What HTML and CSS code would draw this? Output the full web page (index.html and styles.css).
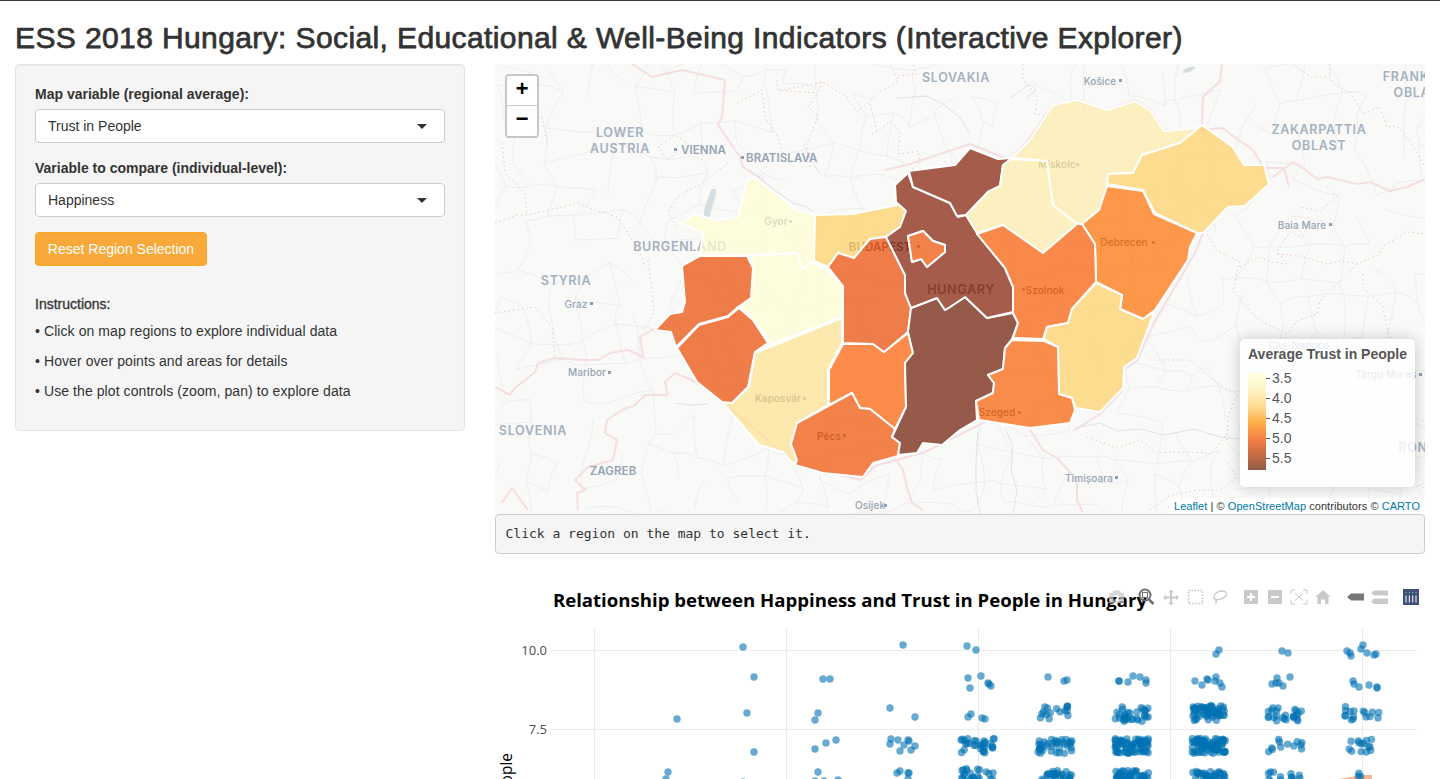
FILE: index.html
```html
<!DOCTYPE html>
<html lang="en">
<head>
<meta charset="utf-8">
<title>ESS 2018 Hungary</title>
<link rel="stylesheet" href="styles.css">
</head>
<body>
<div class="page">
  <h2 class="page-title">ESS 2018 Hungary: Social, Educational &amp; Well-Being Indicators (Interactive Explorer)</h2>
  <div class="layout">
    <aside class="well">
      <div class="form-group">
        <label class="field-label">Map variable (regional average):</label>
        <div class="select-box"><span>Trust in People</span><i class="caret"></i></div>
      </div>
      <div class="form-group">
        <label class="field-label">Variable to compare (individual-level):</label>
        <div class="select-box"><span>Happiness</span><i class="caret"></i></div>
      </div>
      <button class="btn-reset" type="button">Reset Region Selection</button>
      <div class="instructions">
        <p class="instr-head">Instructions:</p>
        <p>• Click on map regions to explore individual data</p>
        <p>• Hover over points and areas for details</p>
        <p>• Use the plot controls (zoom, pan) to explore data</p>
      </div>
    </aside>
    <main class="content">
      <div class="map">
        <svg class="map-svg" viewBox="495 64 930 450" width="930" height="450" xmlns="http://www.w3.org/2000/svg">
          <g id="roads" class="roads"></g>
          <g class="water">
            <path d="M711 190c4-3 6 0 5 5l-4 12-2 10-5 2c-2-5-1-10 1-15z"/>
            <path d="M1183 71c3-3 8-5 12-4 0 3-6 6-12 6z"/>
          </g>
          <g class="rivers">
            <path d="M743 167l14 8 16 14 20 14 12 3 8 6"/>
            <path d="M803 144l7 14 10 16"/>
            <path d="M1075 428l25-5 18 8 22-2 24 6 30-6 26 8 40 4 40-6"/>
            <path d="M675 403l15 2 18-1"/>
            <path d="M1005 428l8 18-2 24 6 20-4 24"/>
            <path d="M978 430l-2 30 0 30 4 24"/>
            <path d="M1010 98l20-14 6 6-10 8M897 98l30-2 16 8 18 14 8 16"/>
          </g>
          <g class="borders">
            <path d="M632 64l20 13 30-7 43 10-3 37-4 8 22 32 3 10 14 9 30 27"/>
            <path d="M495 387l15 8 5-7 20-16 3-9 17-5 27 2 16 0 12-7 18-3 15 7-3-20 12-7 19 2"/>
            <path d="M668 395l-3-13 10-9 17 7 3 3"/>
            <path d="M668 395h-23l-10 10-13 5-15 10-2 13 12 7-4 20-25 7-13 13 10 10-8 3 1 17"/>
            <path d="M512 488l-10 15M512 488l16 22"/>
            <path d="M722 402l75 62 4 2 60 14 14-14 50-14 60-30"/>
            <path d="M895 458l8 12 4 17 5 16 11 7"/>
            <path d="M1030 430l13 20 14 8 20 22v20l6 13"/>
            <path d="M885 170l25-6 60-20 40 16 18-20 25-35 25-5 30 10 27-10 15 9 14 21h36l22-2 31 22 11 18h20l5 19"/>
            <path d="M1222 64l-2 17-17 16-1 27"/>
            <path d="M1273 177l20-15 14 9 10 8 10-2 30 7 13-2 20 9 17-4 18-8"/>
            <path d="M1269 184l-24 22-17 1-25 26-8 20-40 68-18 40-14 9-1 21-23 24-26 16"/>
          </g>
          <g class="borders-dot">
            <path d="M495 313l40-6 17 20 3 30"/>
            <path d="M648 260l4 30 2 23-12 19"/>
            <path d="M780 91l17-4 26-5 24 15 10 15 23-20 18-11-8-17"/>
            <path d="M898 76l19-2-4-10"/>
            <path d="M1023 64v15l14 18-2 17 12 2"/>
            <path d="M872 134l18-12 10 9-2 23 20-3 2 13-12 7"/>
            <path d="M823 82l-6 12-9 13 10 9-11 28 3 23"/>
            <path d="M870 104l7 27"/>
            <path d="M1293 64l17 13h20l3 7 17 8 13 22 17-7 7 20 10-1 13 15 15 26"/>
            <path d="M1330 64v13"/>
            <path d="M1327 186l10 11-17 14-20-4"/>
            <path d="M1207 234l10 17 23 10-7 30 17 20 10 10"/>
            <path d="M1240 267l17-10 16 5 14 2-10-13 13-19 13 5"/>
            <path d="M1277 254l23 2 27 8 13-3 17 3 23-10 3-8 24-14 18 2"/>
            <path d="M1357 264l-17 17-20 20-3 13-20 7-10 13-27-13"/>
            <path d="M1363 274v13l20 20 4 20 6 17"/>
            <path d="M1150 360h40l27 23 20 12-9 22-1 26 10 10"/>
            <path d="M1087 437l30 11 23-8 17 13 13-1 43 1 14-20"/>
            <path d="M1227 463l10 14-17 13h-20l-30 5-20 15"/>
            <path d="M1310 470l35 12 40-8 40 14"/>
            <path d="M1245 385l35 14 25-8 40 22 35-6 45 14"/>
            <path d="M737 103l25-13 3 27 12 18 8 25"/>
            <path d="M777 80l1 10 37 3"/>
            <path d="M495 223l23-8h10l50-12 17 7 22 7 11 16 14 24 3 10"/>
            <path d="M502 143l3 30 20 20 2 20"/>
            <path d="M542 117l6 30"/>
            <path d="M658 147l17-12 12 8-12 10-7 7z"/>
            <path d="M728 163l-26 20-25 14-9 16 10 14"/>
          </g>
          <g class="labels">
            <text class="lbl-lg" x="956" y="82">SLOVAKIA</text>
            <text class="lbl-sm" x="1100" y="85">Košice</text>
            <text class="lbl-lg" x="1406" y="81">FRANK</text>
            <text class="lbl-lg" x="1412" y="97">OBLA</text>
            <text class="lbl-lg" x="620" y="137">LOWER</text>
            <text class="lbl-lg" x="620" y="153">AUSTRIA</text>
            <text class="lbl-md lbl-start" x="681" y="154">VIENNA</text>
            <text class="lbl-md lbl-start" x="746" y="162">BRATISLAVA</text>
            <text class="lbl-lg" x="1319" y="134">ZAKARPATTIA</text>
            <text class="lbl-lg" x="1319" y="150">OBLAST</text>
            <text class="lbl-lg" x="680" y="251">BURGENLAND</text>
            <text class="lbl-lg" x="566" y="285">STYRIA</text>
            <text class="lbl-lg" x="533" y="435">SLOVENIA</text>
            <text class="lbl-md" x="613" y="475">ZAGREB</text>
            <text class="lbl-sm" x="576" y="308">Graz</text>
            <text class="lbl-sm" x="587" y="376">Maribor</text>
            <text class="lbl-sm" x="870" y="509">Osijek</text>
            <text class="lbl-sm" x="1089" y="482">Timișoara</text>
            <text class="lbl-sm" x="1302" y="229">Baia Mare</text>
            <text class="lbl-sm" x="1386" y="378">Târgu Mureș</text>
            <text class="lbl-sm" x="1299" y="349">Cluj-Napoca</text>
            <text class="lbl-lg" x="1413" y="452">RON</text>
            <text class="lbl-sm lbl-city" x="776" y="225">Gyor</text>
            <text class="lbl-md lbl-city" x="880" y="251">BUDAPEST</text>
            <text class="lbl-lg lbl-city" x="961" y="294">HUNGARY</text>
            <text class="lbl-sm lbl-city" x="1057" y="168">Miskolc</text>
            <text class="lbl-sm lbl-city" x="1124" y="246">Debrecen</text>
            <text class="lbl-sm lbl-city" x="1045" y="294">Szolnok</text>
            <text class="lbl-sm lbl-city" x="778" y="402">Kaposvár</text>
            <text class="lbl-sm lbl-city" x="829" y="440">Pécs</text>
            <text class="lbl-sm lbl-city" x="997" y="416">Szeged</text>
          </g>
          <g class="dots">
            <rect x="674" y="148" width="3" height="3"/><rect x="741" y="156" width="3" height="3"/>
            <rect x="590" y="302" width="3" height="3"/><rect x="608" y="371" width="3" height="3"/>
            <rect x="884" y="504" width="3" height="3"/><rect x="1115" y="476" width="3" height="3"/>
            <rect x="1329" y="223" width="3" height="3"/><rect x="1119" y="79" width="3" height="3"/>
            <rect x="1419" y="373" width="3" height="3"/>
            <rect x="789" y="220" width="3" height="3"/><rect x="917" y="245" width="3" height="3"/>
            <rect x="1076" y="163" width="3" height="3"/><rect x="1152" y="241" width="3" height="3"/>
            <rect x="1022" y="288" width="3" height="3"/><rect x="803" y="397" width="3" height="3"/>
            <rect x="843" y="434" width="3" height="3"/><rect x="1018" y="411" width="3" height="3"/>
          </g>
          <g class="regions">
            <polygon class="c-pale" points="680,223 695,214 715,220 738,217 747,180 755,177 787,202 798,211 815,214 814,261 812,262 802,269 797,253 750,255 700,255 703,233"/>
            <polygon class="c-pale" points="750,256 797,253 802,269 813,262 828,270 843,286 842,317 772,344 753,320 740,307 750,298 753,268"/>
            <polygon class="c-light" points="815,215 853,214 902,204 906,211 900,227 885,237 870,239 854,258 838,253 828,267 814,261"/>
            <polygon class="c-vas" points="700,256 747,256 753,268 751,298 738,307 728,316 699,324 676,347 671,332 655,330 670,314 682,312 685,302 682,266"/>
            <polygon class="c-vas" points="677,348 699,325 728,317 739,308 753,320 768,343 755,352 748,387 732,403 722,402 697,382"/>
            <polygon class="c-somogy" points="755,353 842,318 842,343 828,370 828,405 797,423 791,444 797,460 793,464 783,452 759,445 723,403 732,403 749,387"/>
            <polygon class="c-orange" points="843,344 873,344 884,352 908,333 913,353 905,363 906,407 895,429 870,409 860,408 852,393 829,405 829,370"/>
            <polygon class="c-baranya" points="852,393 860,408 870,409 895,429 892,437 900,443 898,456 873,463 863,477 823,473 795,465 797,460 791,444 797,423"/>
            <polygon class="c-vas" points="828,267 838,253 854,258 870,239 886,237 905,275 905,293 911,308 908,332 884,352 873,344 843,343 843,286"/>
            <polygon class="c-darkest" points="911,308 937,298 945,310 950,307 965,297 987,318 1013,313 1018,323 1012,339 1005,348 1003,369 988,375 994,383 993,393 976,401 977,420 960,430 942,445 923,443 917,453 898,455 900,443 892,437 906,407 905,363 913,353 908,332"/>
            <path class="c-dark" d="M886 237 900 227 906 211 896 202 895 185 908 173 913 187 950 203 958 217 966 215 977 233 1005 268 1013 287 1013 312 987 318 965 297 950 307 945 310 937 298 911 308 905 293 905 275ZM908 236 923 231 933 241 945 245 945 252 927 267 921 259 912 262Z"/>
            <polygon class="c-dark" points="909,171 955,165 970,148 998,159 1012,158 1003,165 1000,186 988,192 966,215 957,216 950,203 913,187"/>
            <polygon class="c-buda" points="908,236 923,231 933,241 945,245 945,252 927,267 921,259 912,262"/>
            <polygon class="c-heves" points="1012,159 1047,161 1053,205 1077,224 1043,253 1003,225 977,233 966,215 988,192 1000,186 1003,165"/>
            <polygon class="c-heves" points="1012,158 1030,140 1053,105 1077,100 1108,110 1135,101 1150,110 1164,131 1200,128 1180,143 1142,155 1133,173 1108,174 1107,187 1099,210 1082,224 1077,224 1053,205 1047,161"/>
            <polygon class="c-light" points="1202,125 1233,147 1244,165 1264,165 1269,184 1245,206 1228,207 1203,233 1197,233 1155,213 1143,190 1107,184 1108,174 1133,173 1142,155 1180,143"/>
            <polygon class="c-hajdu" points="1107,186 1143,191 1154,214 1197,233 1190,247 1188,260 1155,310 1143,319 1120,309 1122,295 1096,282 1095,244 1082,224 1099,210"/>
            <polygon class="c-szolnok" points="1003,225 1043,253 1077,224 1082,224 1095,244 1096,282 1072,309 1068,323 1047,327 1043,339 1013,338 1018,323 1013,313 1013,287 1005,268 977,234"/>
            <polygon class="c-light" points="1096,283 1122,295 1120,309 1143,319 1154,312 1137,358 1124,367 1123,388 1100,412 1076,408 1072,398 1059,394 1058,347 1044,339 1047,327 1068,323 1072,309"/>
            <polygon class="c-szeged" points="1012,340 1044,341 1058,347 1059,394 1072,398 1075,410 1070,423 1030,428 979,420 976,401 993,393 994,383 988,375 1003,369 1005,348"/>
          </g>
        </svg>
        <div class="zoom-ctl">
          <a class="zoom-btn">+</a>
          <a class="zoom-btn">−</a>
        </div>
        <div class="legend">
          <div class="legend-title">Average Trust in People</div>
          <div class="legend-body">
            <div class="legend-bar"></div>
            <div class="legend-ticks">
              <span>3.5</span><span>4.0</span><span>4.5</span><span>5.0</span><span>5.5</span>
            </div>
          </div>
        </div>
        <div class="attribution"><a>Leaflet</a> | © <a>OpenStreetMap</a> contributors © <a>CARTO</a></div>
      </div>
      <pre class="output">Click a region on the map to select it.</pre>
      <svg class="plot" viewBox="495 564 930 600" width="930" height="600" xmlns="http://www.w3.org/2000/svg">
        <g class="grid">
          <path d="M594 629V1100M786 629V1100M978 629V1100M1170 629V1100M1362 629V1100"/>
          <path d="M549 650H1417M549 729H1417"/>
        </g>
        <text class="tick" x="547" y="655">10.0</text>
        <text class="tick" x="547" y="734">7.5</text>
        <text class="axis-title" transform="translate(512,753) rotate(-90)">Trust in People</text>
        <polygon class="trend-band" points="1332,780 1363,775 1372,775 1372,782"/>
        <g id="points" class="points"></g>
        <text class="plot-title" x="850" y="607">Relationship between Happiness and Trust in People in Hungary</text>
        <g class="modebar">
          <path class="mb-faint" d="M1109 593h3l1.500-2.500h6l1.500 2.500h3v10h-15zM1116.500 595a3 3 0 1 0 .01 0z"/>
          <g class="mb-active">
            <circle class="mb-ring" cx="1145" cy="595" r="5.500"/>
            <path class="mb-handle" d="M1149 599.500l4.500 4.500"/>
            <rect x="1142.500" y="592.500" width="5" height="5"/>
          </g>
          <path class="mb-icon" d="M1171 589.500l2.800 3h-1.800v4h4v-1.800l3 2.800-3 2.800v-1.800h-4v4h1.800l-2.800 3-2.800-3h1.800v-4h-4v1.800l-3-2.800 3-2.800v1.800h4v-4h-1.800z"/>
          <rect class="mb-dash" x="1188.500" y="590.500" width="14" height="13"/>
          <path class="mb-lasso" d="M1214 597c0-3.500 4-6 8-6 3 0 5 1.500 4.500 3.500-1 3-6 5.500-10 5-1.500-.2-2.500-1.200-2.500-2.500zM1215.500 600c1 1 1 2.500 0 4"/>
          <path class="mb-icon" fill-rule="evenodd" d="M1244 590h14v14h-14zM1250 593v3h-3v2h3v3h2v-3h3v-2h-3v-3z"/>
          <path class="mb-icon" fill-rule="evenodd" d="M1268 590h14v14h-14zM1271 596v2h8v-2z"/>
          <path class="mb-line" d="M1291 594v-4h4M1303 590h4v4M1307 600v4h-4M1295 604h-4v-4M1295 593.500l8 7M1303 593.500l-8 7"/>
          <path class="mb-icon" d="M1323 590l7.500 7h-2v7h-3.500v-4.500h-4v4.500h-3.500v-7h-2z"/>
          <path class="mb-dark" d="M1347 597l4-3.500h13v7h-13z"/>
          <path class="mb-icon" d="M1371 593.500l3-3h14v5h-14zM1371 601.500l3-3h14v5.500h-14z"/>
          <rect class="mb-logo" x="1403" y="589" width="16" height="16"/>
          <path class="mb-logo-bars" d="M1406 595.500v7M1409.300 595.500v7M1412.700 595.500v7M1416 595.500v7"/>
          <path class="mb-logo-dots" d="M1405.500 592.500h1M1408.800 592.500h1M1412.200 592.500h1M1415.500 592.500h1"/>
        </g>
      </svg>
    </main>
  </div>
</div>
<script src="plot.js"></script>
</body>
</html>
```

FILE: styles.css
```css
* { box-sizing: border-box; }
html, body { margin: 0; height: 100%; overflow: hidden; background: #fff; }
body {
  font-family: "Liberation Sans", Arial, sans-serif;
  font-size: 14px;
  line-height: 20px;
  color: #333;
  border-top: 1px solid #3a3a3a;
}
.page { padding: 0 15px; }
.page-title {
  margin: 20px 0 10px;
  font-size: 30px;
  line-height: 33px;
  font-weight: 400;
  letter-spacing: .39px;
  -webkit-text-stroke: 0.75px #333;
  white-space: nowrap;
}
.layout { display: grid; grid-template-columns: 450px 930px; column-gap: 30px; align-items: start; }

.well {
  background: #f5f5f5;
  border: 1px solid #e3e3e3;
  border-radius: 4px;
  padding: 19px;
  box-shadow: inset 0 1px 1px rgba(0,0,0,.05);
}
.form-group { margin-bottom: 15px; }
.field-label { display: block; font-weight: 700; margin-bottom: 5px; }
.select-box {
  height: 34px;
  background: #fff;
  border: 1px solid #ccc;
  border-radius: 4px;
  padding: 6px 12px;
  display: flex;
  align-items: center;
  justify-content: space-between;
  color: #333;
}
.caret {
  display: block;
  width: 0; height: 0;
  border-left: 5px solid transparent;
  border-right: 5px solid transparent;
  border-top: 5px solid #333;
  margin-right: 5px;
}
.btn-reset {
  display: block;
  width: 172px;
  height: 34px;
  padding: 0;
  font: inherit;
  color: #fff;
  background: #f9a93a;
  border: 1px solid #f5a623;
  border-radius: 4px;
}
.instructions { margin-top: 28px; }
.instructions p { margin: 0 0 10px; letter-spacing: .08px; }
.instructions .instr-head { margin-bottom: 7px; letter-spacing: 0; -webkit-text-stroke: 0.3px #333; }

.content { min-width: 0; }
.map { position: relative; width: 930px; height: 450px; background: #f9f9f8; overflow: hidden; }
.map-svg { display: block; }
.water path { fill: #d5dde1; }
.rivers path { fill: none; stroke: #dbe3e7; stroke-width: 1; }
.roads path { fill: none; stroke: #e7e8e8; stroke-width: .7; }
.borders path { fill: none; stroke: #f4dee1; stroke-width: 2; stroke-linejoin: round; }
.borders-dot path { fill: none; stroke: #eec3cc; stroke-width: 1; stroke-dasharray: 1.500 3; }
.labels text {
  font-family: Inter, "Open Sans", sans-serif;
  font-weight: 600;
  text-anchor: middle;
  fill: #a4b1bf;
}
.labels .lbl-lg { font-size: 12.500px; letter-spacing: .7px; }
.labels .lbl-md { font-size: 11.500px; letter-spacing: .1px; fill: #95a4b4; }
.labels .lbl-sm { font-size: 10px; font-weight: 500; letter-spacing: .1px; fill: #95a4b4; }
.labels .lbl-start { text-anchor: start; }
.labels .lbl-city { fill: #777; }
.labels .lbl-lg.lbl-city { fill: #949494; }
.dots rect { fill: #8f9fb0; }
.regions polygon, .regions path { stroke: #fff; stroke-width: 2; stroke-linejoin: round; fill-opacity: .7; }
.regions path { fill-rule: evenodd; }
.c-pale { fill: #ffffd3; }
.c-light { fill: #ffcf62; }
.c-somogy { fill: #ffe18f; }
.c-heves { fill: #ffeda8; }
.c-vas { fill: #eb4800; }
.c-orange { fill: #ff5e00; }
.c-baranya { fill: #f05000; }
.c-hajdu { fill: #ff6e00; }
.c-szolnok { fill: #fa5a00; }
.c-szeged { fill: #fa5e00; }
.c-buda { fill: #ed5000; }
.c-dark { fill: #821a00; }
.c-darkest { fill: #6c1700; }

.zoom-ctl {
  position: absolute;
  left: 10px; top: 10px;
  width: 34px;
  border: 2px solid rgba(0,0,0,.2);
  border-radius: 4px;
  background-clip: padding-box;
}
.zoom-btn {
  display: block;
  width: 30px; height: 30px;
  background: #fff;
  color: #000;
  font: 700 22px/30px "Liberation Mono", monospace;
  text-align: center;
  border-bottom: 1px solid #ccc;
}
.zoom-btn:first-child { border-radius: 2px 2px 0 0; }
.zoom-btn:last-child { border-bottom: 0; border-radius: 0 0 2px 2px; }

.legend {
  position: absolute;
  left: 745px; top: 275px;
  width: 175px; height: 148px;
  padding: 6px 8px;
  background: rgba(255,255,255,.8);
  border-radius: 5px;
  box-shadow: 0 0 15px rgba(0,0,0,.2);
  color: #555;
}
.legend-title { font-weight: 700; font-size: 14px; line-height: 18px; margin-bottom: 10px; white-space: nowrap; }
.legend-body { display: flex; align-items: flex-start; }
.legend-bar {
  width: 18px; height: 97px;
  background: linear-gradient(#ffffe5 0%, #fff3c4 18%, #fed98e 36%, #feb24c 50%, #f47f43 68%, #c56a45 85%, #8f5a48 100%);
}
.legend-ticks { display: flex; flex-direction: column; margin-top: -5px; }
.legend-ticks span {
  display: flex;
  align-items: center;
  height: 20px;
  font-size: 14px;
  line-height: 20px;
}
.legend-ticks span::before { content: ""; width: 4px; height: 1px; background: #555; margin-right: 2px; }
.attribution {
  position: absolute;
  right: 0; bottom: 0;
  padding: 0 5px;
  font-size: 11px;
  letter-spacing: .05px;
  line-height: 16px;
  color: #333;
  background: rgba(255,255,255,.8);
  white-space: nowrap;
}
.attribution a { color: #0078a8; }

.output {
  margin: 0 0 10px;
  height: 40px;
  padding: 8.500px 9.500px;
  font: 13px/19px "DejaVu Sans Mono", monospace;
  color: #333;
  background: #f5f5f5;
  border: 1px solid #ccc;
  border-radius: 4px;
}
.plot { display: block; }
.plot text { font-family: "Open Sans", sans-serif; }
.grid path { fill: none; stroke: #ebebeb; stroke-width: 1; shape-rendering: crispEdges; }
.plot .tick { font-size: 13px; fill: #4d4d4d; text-anchor: end; }
.plot .axis-title { font-size: 15.500px; fill: #000; text-anchor: end; }
.plot .plot-title { font-size: 18.600px; font-weight: 700; fill: #000; text-anchor: middle; }
.points circle { fill: #0072b2; fill-opacity: .6; }
.trend-band { fill: #e8834a; fill-opacity: .6; }
.mb-faint { fill: #c8c8c8; fill-rule: evenodd; fill-opacity: .7; }
.mb-ring { fill: none; stroke: #6f6f6f; stroke-width: 2; }
.mb-handle { fill: none; stroke: #6f6f6f; stroke-width: 2.500; }
.mb-active rect { fill: none; stroke: #6f6f6f; stroke-width: 1; }
.mb-icon { fill: #c9c9c9; }
.mb-dash { fill: none; stroke: #c4c4c4; stroke-width: 1.500; stroke-dasharray: 1.500 1.500; }
.mb-lasso { fill: none; stroke: #c9c9c9; stroke-width: 1.300; }
.mb-line { fill: none; stroke: #c9c9c9; stroke-width: 1; }
.mb-dark { fill: #777; }
.mb-logo { fill: #3f4f75; }
.mb-logo-bars { fill: none; stroke: #fff; stroke-width: 1; }
.mb-logo-dots { fill: none; stroke: #6ed6d0; stroke-width: 1; }
```

FILE: plot.js
```js
(function () {
  var SVG = "http://www.w3.org/2000/svg";
  var seed = 20180;
  function rnd() {
    seed = (seed * 16807) % 2147483647;
    return seed / 2147483647;
  }

  /* Scatter plot */
  var layer = document.getElementById("points");
  function add(x, y) {
    var c = document.createElementNS(SVG, "circle");
    c.setAttribute("cx", x);
    c.setAttribute("cy", y);
    c.setAttribute("r", 3.7);
    layer.appendChild(c);
  }
  // Sparse points, read one by one.
  var sparse = [
    [743,647],[754,677],[747,713],[754,752],[677,719],[668,772],[666,779],[743,782],
    [823,679],[830,679],[818,713],[815,720],[815,749],[826,743],[836,740],[818,772],[815,781],[824,781],[838,780],
    [903,645],[890,708],[915,717],[891,739],[898,740],[908,740],[890,744],[904,745],[915,746],[911,750],[900,751],[909,741],
    [897,773],[900,771],[908,773],[909,773],[908,779],
    [967,646],[976,650],[968,678],[981,676],[988,683],[991,686],[970,688],[989,684],[971,714],[968,717],[982,718],[985,719],
    [1048,677],[1067,680],[1064,681],
    [1119,681],[1119,681],[1128,682],[1133,676],[1140,677],[1146,680],[1146,683],
    [1219,650],[1216,654],[1195,681],[1202,685],[1207,679],[1216,677],[1215,681],[1220,683],[1222,687],[1208,680],
    [1282,651],[1288,653],[1277,678],[1290,677],[1272,684],[1279,683],[1283,686],[1276,683],
    [1347,651],[1351,656],[1350,653],[1363,645],[1361,649],[1367,653],[1374,655],[1376,654],
    [1353,681],[1354,684],[1359,687],[1369,685],[1377,687],[1377,688]
  ];
  sparse.forEach(function (p) { add(p[0], p[1]); });
  // Dense cells: column centre, row centre, number of respondents.
  var dense = [
    [1055,713,16],[1132,714,32],[1209,713,55],[1285,714,24],[1362,713,16],
    [978,746,30],[1055,746,36],[1132,746,70],[1209,746,80],[1285,746,12],[1362,746,14],
    [978,776,26],[1055,778,34],[1132,778,60],[1209,778,60],[1285,778,22],[1362,779,5]
  ];
  dense.forEach(function (d) {
    for (var i = 0; i < d[2]; i++) {
      add(d[0] + (rnd() - 0.5) * 34, d[1] + (rnd() - 0.5) * 15);
    }
  });

  /* Base-map road web: a jittered grid with some links left out */
  var roads = document.getElementById("roads");
  var step = 30, cols = 33, rows = 16, nodes = [];
  for (var r = 0; r < rows; r++) {
    nodes[r] = [];
    for (var q = 0; q < cols; q++) {
      nodes[r][q] = [
        495 + q * step + (rnd() - 0.5) * 24,
        64 + r * step + (rnd() - 0.5) * 24
      ];
    }
  }
  function link(a, b) {
    var mx = (a[0] + b[0]) / 2 + (rnd() - 0.5) * 10;
    var my = (a[1] + b[1]) / 2 + (rnd() - 0.5) * 10;
    var p = document.createElementNS(SVG, "path");
    p.setAttribute("d", "M" + a[0].toFixed(1) + " " + a[1].toFixed(1) +
      "Q" + mx.toFixed(1) + " " + my.toFixed(1) + " " + b[0].toFixed(1) + " " + b[1].toFixed(1));
    roads.appendChild(p);
  }
  for (r = 0; r < rows; r++) {
    for (q = 0; q < cols; q++) {
      if (q + 1 < cols && rnd() < 0.62) link(nodes[r][q], nodes[r][q + 1]);
      if (r + 1 < rows && rnd() < 0.62) link(nodes[r][q], nodes[r + 1][q]);
    }
  }
})();
```
